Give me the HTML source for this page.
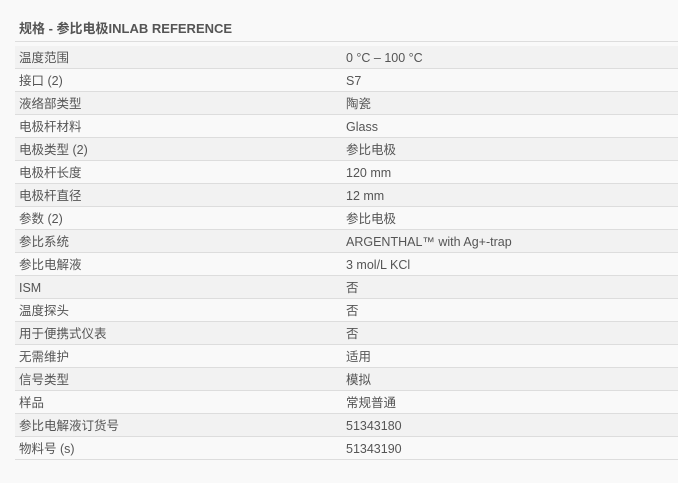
<!DOCTYPE html>
<html><head><meta charset="utf-8"><style>
body{margin:0;background:#f9f9f9;width:678px;height:483px;overflow:hidden;font-family:"Liberation Sans","Noto Sans CJK SC",sans-serif;color:#555;font-size:12.5px}
h2{position:absolute;left:19px;top:21px;margin:0;font-size:13px;line-height:16px;font-weight:bold;color:#555}
.hl{position:absolute;left:15px;right:0;top:41px;height:1px;background:#ddd}
.t{position:absolute;left:15px;top:46px;width:663px}
.r{height:22px;border-bottom:1px solid #ddd;position:relative;overflow:hidden}
.r:nth-child(odd){background:#f2f2f2}
.r span{position:absolute;top:1px;line-height:22px;height:22px;white-space:nowrap}
.a{left:4px}.b{left:331px}
</style></head><body>
<h2>规格 - 参比电极INLAB REFERENCE</h2>
<div class="hl"></div>
<div class="t">
<div class="r"><span class="a">温度范围</span><span class="b">0 °C – 100 °C</span></div>
<div class="r"><span class="a">接口 (2)</span><span class="b">S7</span></div>
<div class="r"><span class="a">液络部类型</span><span class="b">陶瓷</span></div>
<div class="r"><span class="a">电极杆材料</span><span class="b">Glass</span></div>
<div class="r"><span class="a">电极类型 (2)</span><span class="b">参比电极</span></div>
<div class="r"><span class="a">电极杆长度</span><span class="b">120 mm</span></div>
<div class="r"><span class="a">电极杆直径</span><span class="b">12 mm</span></div>
<div class="r"><span class="a">参数 (2)</span><span class="b">参比电极</span></div>
<div class="r"><span class="a">参比系统</span><span class="b">ARGENTHAL™ with Ag+-trap</span></div>
<div class="r"><span class="a">参比电解液</span><span class="b">3 mol/L KCl</span></div>
<div class="r"><span class="a">ISM</span><span class="b">否</span></div>
<div class="r"><span class="a">温度探头</span><span class="b">否</span></div>
<div class="r"><span class="a">用于便携式仪表</span><span class="b">否</span></div>
<div class="r"><span class="a">无需维护</span><span class="b">适用</span></div>
<div class="r"><span class="a">信号类型</span><span class="b">模拟</span></div>
<div class="r"><span class="a">样品</span><span class="b">常规普通</span></div>
<div class="r"><span class="a">参比电解液订货号</span><span class="b">51343180</span></div>
<div class="r"><span class="a">物料号 (s)</span><span class="b">51343190</span></div>
</div>
</body></html>
